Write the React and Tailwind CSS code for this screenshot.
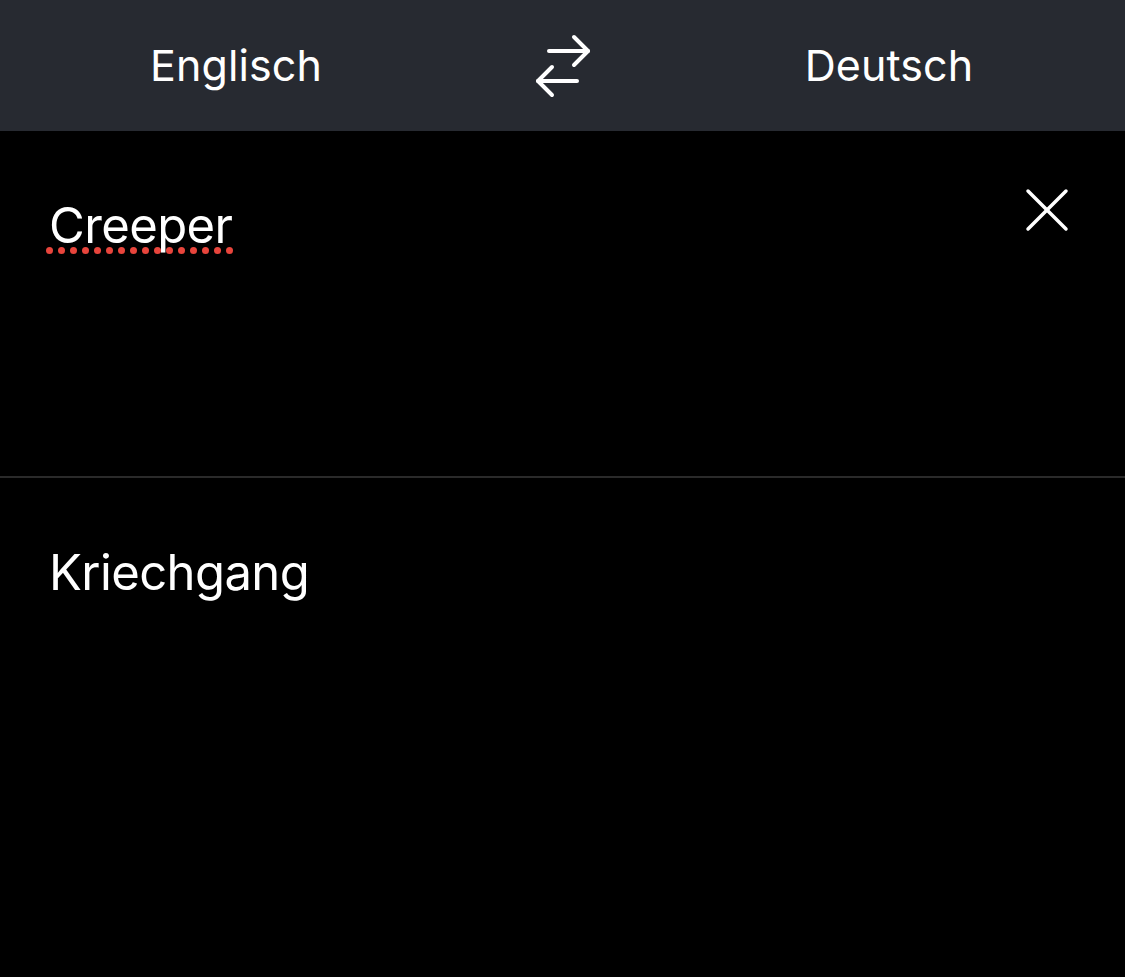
import React from 'react';

const font = { fontFamily: 'Inter, "Noto Sans", sans-serif' };

const SwapIcon = () => (
  <svg width="66" height="70" viewBox="0 0 66 70" fill="none" stroke="white" strokeWidth="4" strokeLinecap="round" strokeLinejoin="round">
    <path d="M19 21H58" />
    <path d="M44 7L58 21L44 35" />
    <path d="M47 51H8" />
    <path d="M22 37L8 51L22 65" />
  </svg>
);

const CloseIcon = () => (
  <svg width="44" height="44" viewBox="0 0 44 44" fill="none" stroke="white" strokeWidth="3.5" strokeLinecap="round">
    <path d="M3 3L41 41" />
    <path d="M41 3L3 41" />
  </svg>
);

const App = () => {
  const dots = Array.from({ length: 16 });

  return (
    <div className="w-[1125px] h-[977px] bg-black text-white flex flex-col overflow-hidden" style={font}>
      <div className="h-[131px] shrink-0 bg-[#272a31] grid grid-cols-[472px_181px_472px] items-center">
        <div className="text-center text-[43px] tracking-[0.1px] pb-[1px]">Englisch</div>
        <div className="flex justify-center pb-[1px]">
          <SwapIcon />
        </div>
        <div className="text-center text-[43px] tracking-[0.1px] pb-[1px]">Deutsch</div>
      </div>

      <div className="h-[345px] shrink-0 relative pl-[49px] pt-[64px]">
        <span className="relative inline-block text-[49px] leading-[62px] tracking-[-0.6px]">
          Creeper
          <span className="absolute left-[-3px] top-[52px] flex gap-[5px]">
            {dots.map((_, i) => (
              <span key={i} className="w-[7px] h-[7px] rounded-full bg-[#e8453c]" />
            ))}
          </span>
        </span>
        <button className="absolute right-[56px] top-[57px]">
          <CloseIcon />
        </button>
      </div>

      <div className="h-[2px] shrink-0 bg-[#2a2a2a]" />

      <div className="flex-1 pl-[49px] pt-[64px]">
        <div className="text-[49px] leading-[62px] tracking-[-0.6px]">Kriechgang</div>
      </div>
    </div>
  );
};

export default App;
